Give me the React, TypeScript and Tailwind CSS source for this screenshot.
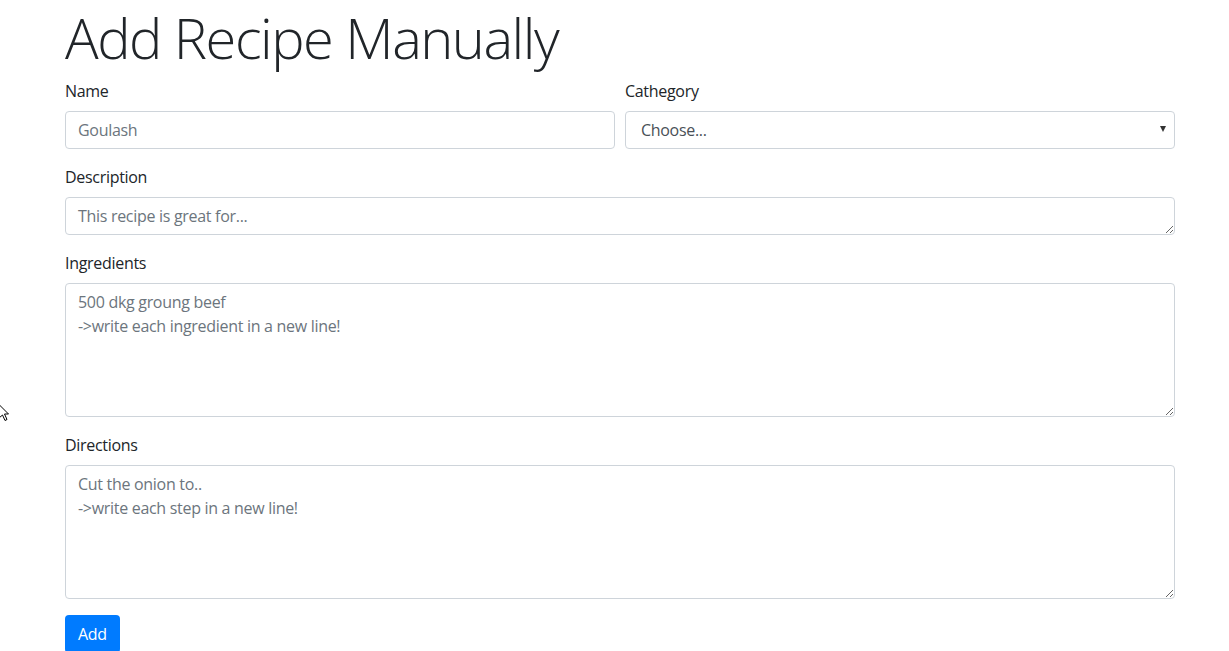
import React from "react";

const font = { fontFamily: "'Open Sans', 'Noto Sans', sans-serif" };

const inputCls =
  "block w-full h-[38px] rounded-[4px] border border-[#ced4da] bg-white px-3 text-[16px] text-[#495057] placeholder:text-[#6c757d] outline-none";

const areaCls =
  "block w-full rounded-[4px] border border-[#ced4da] bg-white px-3 py-[6px] text-[16px] leading-[24px] text-[#495057] placeholder:text-[#6c757d] outline-none";

const Label: React.FC<{ children: React.ReactNode }> = ({ children }) => (
  <label className="mb-2 block text-[16px] leading-[24px] text-[#212529]">
    {children}
  </label>
);

export default function App() {
  return (
    <div className="relative min-h-[651px] bg-white tracking-[-0.3px]" style={font}>
      <div className="ml-[65px] w-[1110px] pt-[4px]">
        <h1 className="mb-2 text-[56px] font-light leading-[67px] tracking-[-1.5px] text-[#212529]">
          Add Recipe Manually
        </h1>
        <form className="flex flex-col">
          <div className="mb-4 grid grid-cols-2 gap-[10px]">
            <div>
              <Label>Name</Label>
              <input className={inputCls} placeholder="Goulash" />
            </div>
            <div>
              <Label>Cathegory</Label>
              <div className="relative">
                <select className={inputCls + " appearance-none pl-[15px]"} defaultValue="">
                  <option value="">Choose...</option>
                </select>
                <span className="pointer-events-none absolute right-[9px] top-[15px] h-0 w-0 border-x-[3px] border-t-[6px] border-x-transparent border-t-[#333]" />
              </div>
            </div>
          </div>
          <div className="mb-4">
            <Label>Description</Label>
            <textarea rows={1} className={areaCls + " h-[38px]"} placeholder="This recipe is great for..." />
          </div>
          <div className="mb-4">
            <Label>Ingredients</Label>
            <textarea
              className={areaCls + " h-[134px]"}
              placeholder={"500 dkg groung beef\n->write each ingredient in a new line!"}
            />
          </div>
          <div className="mb-4">
            <Label>Directions</Label>
            <textarea
              className={areaCls + " h-[134px]"}
              placeholder={"Cut the onion to..\n->write each step in a new line!"}
            />
          </div>
          <div>
            <button
              type="button"
              className="h-[38px] rounded-[4px] bg-[#007bff] px-[13px] text-[16px] text-white"
            >
              Add
            </button>
          </div>
        </form>
      </div>
      <svg
        className="absolute left-0 top-[403px]"
        width="10"
        height="18"
        viewBox="0 0 10 18"
      >
        <path
          d="M-2 0.5 L8.5 11 L4.5 11 L7 16.5 L5 17.5 L2.5 12 L-1 15 Z"
          fill="white"
          stroke="black"
          strokeWidth="1"
        />
      </svg>
    </div>
  );
}
